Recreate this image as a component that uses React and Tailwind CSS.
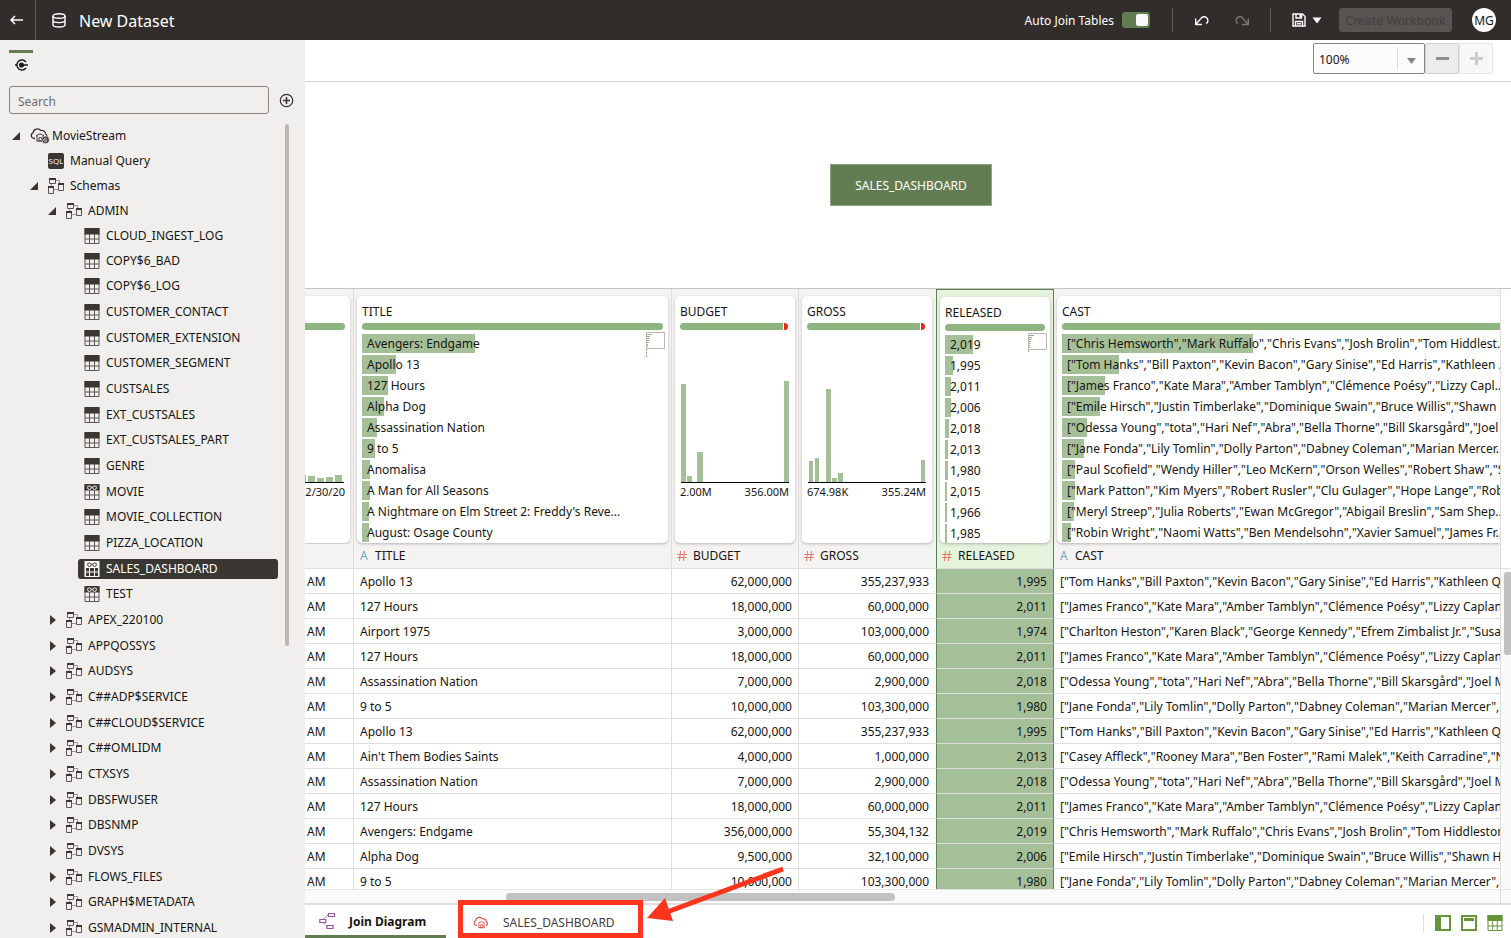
import React from "react";

const INK = "#3a3632";

const tables = [
  ["CLOUD_INGEST_LOG"], ["COPY$6_BAD"], ["COPY$6_LOG"], ["CUSTOMER_CONTACT"], ["CUSTOMER_EXTENSION"],
  ["CUSTOMER_SEGMENT"], ["CUSTSALES"], ["EXT_CUSTSALES"], ["EXT_CUSTSALES_PART"], ["GENRE"], ["MOVIE", true],
  ["MOVIE_COLLECTION"], ["PIZZA_LOCATION"], ["SALES_DASHBOARD", true], ["TEST", true],
];

const schemas = [
  "APEX_220100", "APPQOSSYS", "AUDSYS", "C##ADP$SERVICE", "C##CLOUD$SERVICE", "C##OMLIDM", "CTXSYS",
  "DBSFWUSER", "DBSNMP", "DVSYS", "FLOWS_FILES", "GRAPH$METADATA", "GSMADMIN_INTERNAL",
];

const casts = {
  apollo: '["Tom Hanks","Bill Paxton","Kevin Bacon","Gary Sinise","Ed Harris","Kathleen Quinlan"]',
  hours: '["James Franco","Kate Mara","Amber Tamblyn","Clémence Poésy","Lizzy Caplan"]',
  airport: '["Charlton Heston","Karen Black","George Kennedy","Efrem Zimbalist Jr.","Susan Clark"]',
  nation: '["Odessa Young","tota","Hari Nef","Abra","Bella Thorne","Bill Skarsgård","Joel McHale"]',
  nine: '["Jane Fonda","Lily Tomlin","Dolly Parton","Dabney Coleman","Marian Mercer","Sterling Hayden"]',
  saints: '["Casey Affleck","Rooney Mara","Ben Foster","Rami Malek","Keith Carradine","Nate Parker"]',
  avengers: '["Chris Hemsworth","Mark Ruffalo","Chris Evans","Josh Brolin","Tom Hiddleston"]',
  alpha: '["Emile Hirsch","Justin Timberlake","Dominique Swain","Bruce Willis","Shawn Hatosy"]',
};

const rows = [
  ["Apollo 13", "62,000,000", "355,237,933", "1,995", casts.apollo],
  ["127 Hours", "18,000,000", "60,000,000", "2,011", casts.hours],
  ["Airport 1975", "3,000,000", "103,000,000", "1,974", casts.airport],
  ["127 Hours", "18,000,000", "60,000,000", "2,011", casts.hours],
  ["Assassination Nation", "7,000,000", "2,900,000", "2,018", casts.nation],
  ["9 to 5", "10,000,000", "103,300,000", "1,980", casts.nine],
  ["Apollo 13", "62,000,000", "355,237,933", "1,995", casts.apollo],
  ["Ain't Them Bodies Saints", "4,000,000", "1,000,000", "2,013", casts.saints],
  ["Assassination Nation", "7,000,000", "2,900,000", "2,018", casts.nation],
  ["127 Hours", "18,000,000", "60,000,000", "2,011", casts.hours],
  ["Avengers: Endgame", "356,000,000", "55,304,132", "2,019", casts.avengers],
  ["Alpha Dog", "9,500,000", "32,100,000", "2,006", casts.alpha],
  ["9 to 5", "10,000,000", "103,300,000", "1,980", casts.nine],
];

const titleBars = [
  ["Avengers: Endgame", 113], ["Apollo 13", 34], ["127 Hours", 26], ["Alpha Dog", 22], ["Assassination Nation", 15],
  ["9 to 5", 13], ["Anomalisa", 8], ["A Man for All Seasons", 8],
  ["A Nightmare on Elm Street 2: Freddy's Reve...", 7], ["August: Osage County", 7],
];

const releasedBars = [
  ["2,019", 28], ["1,995", 8], ["2,011", 6], ["2,006", 6], ["2,018", 4],
  ["2,013", 3], ["1,980", 3], ["2,015", 2], ["1,966", 2], ["1,985", 2],
];

const castBars = [
  ['["Chris Hemsworth","Mark Ruffalo","Chris Evans","Josh Brolin","Tom Hiddlest...', 191],
  ['["Tom Hanks","Bill Paxton","Kevin Bacon","Gary Sinise","Ed Harris","Kathleen ...', 57],
  ['["James Franco","Kate Mara","Amber Tamblyn","Clémence Poésy","Lizzy Capl...', 43],
  ['["Emile Hirsch","Justin Timberlake","Dominique Swain","Bruce Willis","Shawn ...', 38],
  ['["Odessa Young","tota","Hari Nef","Abra","Bella Thorne","Bill Skarsgård","Joel ...', 25],
  ['["Jane Fonda","Lily Tomlin","Dolly Parton","Dabney Coleman","Marian Mercer...', 22],
  ['["Paul Scofield","Wendy Hiller","Leo McKern","Orson Welles","Robert Shaw","S...', 13],
  ['["Mark Patton","Kim Myers","Robert Rusler","Clu Gulager","Hope Lange","Rob...', 13],
  ['["Meryl Streep","Julia Roberts","Ewan McGregor","Abigail Breslin","Sam Shep...', 12],
  ['["Robin Wright","Naomi Watts","Ben Mendelsohn","Xavier Samuel","James Fr...', 9],
];

function SchemaIcon() {
  return (
    <svg className="size-4 shrink-0" viewBox="0 0 16 16" fill="none" stroke={INK}>
      <path d="M8 2.5h3.500V6M3.500 5.500V9M6 11.500h4" stroke="#99958f" />
      <path d="M1.500 1.500h6v4h-6zM.5 9.500h5v6h-5zM10.500 6.500h5v6h-5z" stroke="#5b5752" />
      <path d="M1 1h7M0 9h6M10 6h6" strokeWidth="2" />
    </svg>
  );
}

function TableIcon({ view, light }) {
  const c = light ? "#ffffff" : INK;
  const hole = light ? INK : "#f0efed";
  return (
    <svg className="size-4 shrink-0" viewBox="0 0 16 16" fill="none">
      {light ? (
        <g>
          <path d="M.5 0h15v16H.5z" fill="#ffffff" />
          <path d="M2 7h3v3.500H2zM6 7h4v3.500H6zM11 7h3v3.500h-3zM2 11.500h3V15H2zM6 11.500h4V15H6zM11 11.500h3V15h-3z" fill={INK} />
        </g>
      ) : (
        <g>
          <path d="M1 .5h14v15H1zM1 11h14M5.500 6v9.500M10.500 6v9.500" stroke="#5b5752" />
          <path d="M.5 0h15v6.500H.5z" fill={c} />
        </g>
      )}
      {view && (
        <g stroke={hole} strokeWidth="1">
          <circle cx="5.400" cy="3.700" r="1.800" />
          <circle cx="10.600" cy="3.700" r="1.800" />
          <path d="M7.200 3.400q.8-.6 1.600 0M3.400 2.400l-.7-.7M12.600 2.400l.7-.7" />
        </g>
      )}
    </svg>
  );
}

function Caret({ open }) {
  return (
    <svg className="size-[10px] shrink-0" viewBox="0 0 10 10" fill={INK}>
      {open ? <path d="M8 1v8H0z" /> : <path d="M2 0l6 5-6 5z" />}
    </svg>
  );
}

function CloudDb({ dark, className }) {
  const c = dark ? INK : "#d0453c";
  return (
    <svg className={className} viewBox="0 0 20 17" fill="none" stroke={c} strokeWidth="1.300">
      <path d="M5 11.500H4A3 3 0 0 1 3 5.800 4.500 4.500 0 0 1 11 3.600 3.600 3.600 0 0 1 15.600 7a2.400 2.400 0 0 1-.4 4.500" />
      <path d="M6 8.800l4-2 4 2M7 9v5M13 9v5M6.500 14h7" strokeWidth="1" />
      <path d="M9 10.500h2.500V14H9z" strokeWidth=".9" />
      {dark && (
        <g>
          <circle cx="15.500" cy="12.800" r="3.800" fill={INK} stroke="#f0efed" strokeWidth=".6" />
          <path d="M13.500 13h4M16.900 11.800a1.800 1.800 0 1 0 0 2.200" stroke="#f0efed" strokeWidth=".7" />
        </g>
      )}
    </svg>
  );
}

function TreeRow({ pad, first, children }) {
  return (
    <li className={`flex items-center whitespace-nowrap nth-[3n]:h-[25px] ${first ? "h-[25px]" : "h-[26px]"} ${pad}`}>
      {children}
    </li>
  );
}

function Sidebar() {
  return (
    <aside className="flex w-[305px] shrink-0 flex-col bg-[#f0efed]">
      <div className="px-[9px] pt-[10px]">
        <button aria-label="Connections" className="flex h-[26px] w-6 flex-col items-center border-t-3 border-[#627d52] pt-[5px]">
          <svg className="h-[14px] w-[15px]" viewBox="0 0 15 14" fill="none" stroke="#1d1b19" strokeWidth="1.500">
            <path d="M12 4.200A5 5 0 1 0 12 9.800M1 7h2M8 7h6" />
            <circle cx="7.500" cy="7" r="1.800" fill="#1d1b19" />
          </svg>
        </button>
      </div>
      <div className="flex items-center gap-[10px] px-[9px] pt-[10px]">
        <input
          type="text"
          aria-label="Search"
          placeholder="Search"
          className="h-7 w-[260px] rounded-[3px] border border-[#8b8580] bg-transparent px-2 pt-0.5 text-[12px] placeholder:text-[#6f6a66] outline-none"
        />
        <button aria-label="Add">
          <svg className="size-[15px]" viewBox="0 0 15 15" fill="none" stroke="#33302d" strokeWidth="1.200">
            <circle cx="7.500" cy="7.500" r="6.200" />
            <path d="M7.500 4v7M4 7.500h7" strokeWidth="1.500" />
          </svg>
        </button>
      </div>
      <div className="flex min-h-0 flex-1 gap-[7px] overflow-hidden pt-[9px]">
        <ul className="w-[278px] text-[12px] text-[#161513]">
          <TreeRow first pad="pl-3">
            <Caret open />
            <CloudDb dark className="ml-2 mr-[2px] h-[17px] w-5" />
            MovieStream
          </TreeRow>
          <TreeRow first pad="pl-12">
            <span className="mr-1.5 flex size-4 items-center justify-center overflow-hidden rounded-[2px] bg-[#3a3632] font-['Open_Sans'] text-[8px] text-white">SQL</span>
            Manual Query
          </TreeRow>
          <TreeRow first pad="pl-[30px] gap-2">
            <Caret open />
            <SchemaIcon />
            <span className="-ml-0.5">Schemas</span>
          </TreeRow>
          <TreeRow first pad="pl-12 gap-2">
            <Caret open />
            <SchemaIcon />
            <span className="-ml-0.5">ADMIN</span>
          </TreeRow>
          {tables.map(([name, view], i) => {
            const on = name === "SALES_DASHBOARD";
            return (
              <TreeRow key={name} first={i < 2} pad="pl-[78px]">
                <div className={`flex h-5 flex-1 items-center gap-1.5 rounded-[3px] px-1.5 ${on ? "bg-[#3a3632] text-white" : ""}`}>
                  <TableIcon view={view} light={on} />
                  {name}
                </div>
              </TreeRow>
            );
          })}
          {schemas.map((name) => (
            <TreeRow key={name} pad="pl-12 gap-2">
              <Caret />
              <SchemaIcon />
              <span className="-ml-0.5">{name}</span>
            </TreeRow>
          ))}
        </ul>
        <div className="mt-px h-[522px] w-1 rounded-full bg-[#bcb6b1]" />
      </div>
    </aside>
  );
}

function Header() {
  return (
    <header className="flex h-10 shrink-0 items-center bg-[#312d2a] pr-[15px] text-white">
      <button aria-label="Back" className="flex h-10 w-9 items-center justify-center border-r border-[#5c5855] pr-0.5">
        <svg className="h-[10px] w-[13px]" viewBox="0 0 13 10" fill="none" stroke="#fff" strokeWidth="1.500">
          <path d="M13 5H1M5 1L1 5l4 4" />
        </svg>
      </button>
      <svg className="ml-4 h-[15px] w-[14px]" viewBox="0 0 14 15" fill="none" stroke="#fff" strokeWidth="1.400">
        <ellipse cx="7" cy="3" rx="6" ry="2.200" />
        <path d="M1 3v8.800C1 13 3.700 14 7 14s6-1 6-2.200V3M1 7.500C1 8.700 3.700 9.600 7 9.600s6-.9 6-2.100" />
      </svg>
      <h1 className="ml-[13px] flex-1 pt-0.5 text-[16px]">New Dataset</h1>
      <label className="flex items-center gap-2">
        <span className="pt-0.5 text-[12px]">Auto Join Tables</span>
        <input
          type="checkbox"
          defaultChecked
          className="relative h-4 w-7 appearance-none rounded-[3px] bg-[#627d52] after:absolute after:right-0.5 after:top-0.5 after:size-3 after:rounded-[2px] after:bg-[#fbf9f8] after:content-['']"
        />
      </label>
      <div className="ml-[22px] h-6 w-px bg-[#5c5855]" />
      <button aria-label="Undo" className="ml-[21px]">
        <svg className="h-[11px] w-[15px]" viewBox="0 0 15 11" fill="none" stroke="#fff" strokeWidth="1.400">
          <path d="M1.700 3.500v6H8M1.900 9.300L6.800 3.600A3.800 3.800 0 1 1 12.300 8.600" />
        </svg>
      </button>
      <button aria-label="Redo" className="ml-[26px]" disabled>
        <svg className="h-[11px] w-[15px]" viewBox="0 0 15 11" fill="none" stroke="#7b7774" strokeWidth="1.400">
          <path d="M13.300 3.500v6H7M13.100 9.300L8.200 3.600A3.800 3.800 0 1 0 2.700 8.600" />
        </svg>
      </button>
      <div className="ml-5 h-6 w-px bg-[#5c5855]" />
      <button aria-label="Save" className="ml-[21px] flex items-center gap-[6px]">
        <svg className="size-[14px]" viewBox="0 0 14 14" fill="none" stroke="#fff" strokeWidth="1.400">
          <path d="M1 1h9.500L13 3.500V13H1zM4 1v4h5.500V1M3.500 13V8.500h7V13M5 10.800h4" />
          <path d="M7.500 1.500h1.500v2.500H7.500z" fill="#fff" stroke="none" />
        </svg>
        <svg className="h-[7px] w-[10px]" viewBox="0 0 10 7" fill="#fff">
          <path d="M.5.500h9L5 6.500z" />
        </svg>
      </button>
      <button disabled className="ml-[17px] h-6 w-[113px] rounded-[3px] bg-[#575451] pt-0.5 text-[12px] font-medium text-[#45423f]">
        Create Workbook
      </button>
      <button className="ml-5 flex size-6 items-center justify-center rounded-full bg-white pt-0.5 text-[12px] text-[#161513]">MG</button>
    </header>
  );
}

function QualityBar({ missing }) {
  return (
    <div className={`flex h-[7px] gap-px ${missing ? "mr-px" : ""}`}>
      <div className={`flex-1 bg-[#8db580] ${missing ? "rounded-l-full" : "rounded-full"}`} />
      {missing && <div className="w-1 rounded-r-full bg-[#e5281e]" />}
    </div>
  );
}

function Card({ title, missing, bleed, className = "", mini, children }) {
  return (
    <div className={`relative overflow-hidden bg-white shadow-[0_1px_3px_rgba(0,0,0,0.25)] ${className}`}>
      <div className="mb-[3px] mt-[7px] h-[17px] px-[5px] text-[12px] leading-[17px]">{title}</div>
      <div className={missing ? "pl-[5px] pr-1.5" : bleed ? "pl-[5px]" : "px-[5px]"}>
        {bleed ? <div className="h-[7px] rounded-l-full bg-[#8db580]" /> : <QualityBar missing={missing} />}
        {children}
      </div>
      {mini && (
        <svg className="absolute right-[3px] top-9 h-[26px] w-[19px]" viewBox="0 0 19 26" fill="none">
          <path d="M.5.500h18v16H.5z" stroke="#bcb6b1" />
          <path d="M1 2.500h5M1 4.500h3M1 6.500h2.500M1 8.500h2M1 10.500h1.500M1 12.500h1M1 14.500h1" stroke="#8db580" />
          <path d={mini === "long" ? "M.5 17v8" : "M.5 17v2"} stroke="#8db580" strokeDasharray="2 1" />
        </svg>
      )}
    </div>
  );
}

function BarList({ items }) {
  return (
    <ul className="mt-1 flex flex-col gap-0.5">
      {items.map(([text, w]) => (
        <li key={text} className="relative h-[19px] whitespace-nowrap pl-[5px] text-[12px] leading-[20px]">
          <div className="absolute inset-y-0 left-0 bg-[#a5c098]" style={{ width: w }} />
          <span className="relative">{text}</span>
        </li>
      ))}
    </ul>
  );
}

function Histogram({ width, bars, from, to }) {
  return (
    <div className="pl-px pt-1">
      <svg className="h-[150px] w-full" viewBox={`0 0 ${width} 150`} preserveAspectRatio="none">
        {bars.map(([x, w, h]) => (
          <rect key={x} x={x} y={148 - h} width={w} height={h} fill="#a5c098" />
        ))}
        <path d={`M0 148.500H${width}`} stroke="#000" />
      </svg>
      <div className="-ml-px flex justify-between text-[11px] leading-[16px]">
        <span>{from}</span>
        <span>{to}</span>
      </div>
    </div>
  );
}

const headCell = "border-r border-[#dfdedc] bg-[#f4f3f2] text-left font-normal";
const tileCell = headCell + " px-[3px] pt-[7px] pb-px align-top";
const nameCell = headCell + " h-[25px] border-b p-0 align-middle";
const cell = "h-[25px] overflow-hidden whitespace-nowrap border-b border-r border-[#dfdedc] px-1.5 pb-0 pt-0.5";

function ColumnName({ type, children }) {
  return (
    <div className="flex items-center pl-1.5">
      {type === "A" ? (
        <span className="w-[15px] text-[12px] text-[#6fa9bd]">A</span>
      ) : (
        <svg className="-ml-px mr-1.5 size-[10px]" viewBox="0 0 10 10" fill="none" stroke="#dd7a68">
          <path d="M3.500 0L2.500 10M7.500 0l-1 10M.3 3.500h9.500M0 6.500h9.500" />
        </svg>
      )}
      {children}
    </div>
  );
}

function DataGrid() {
  return (
    <div className="flex min-h-0 flex-1">
      <div className="min-w-0 flex-1 overflow-hidden">
        <table className="w-full table-fixed border-separate border-spacing-0 text-[12px] text-[#161513]">
          <colgroup>
            <col className="w-[49px]" />
            <col className="w-[318px]" />
            <col className="w-[127px]" />
            <col className="w-[137px]" />
            <col className="w-[118px]" />
            <col />
          </colgroup>
          <thead>
            <tr>
              <th className={headCell + " pb-px pl-0 pr-[3px] pt-[7px] align-top"}>
                <div className="h-[247px] overflow-hidden rounded-r-[5px] bg-white pr-[5px] pt-[27px] shadow-[0_1px_3px_rgba(0,0,0,0.25)]">
                  <div className="h-[7px] rounded-r-full bg-[#8db580]" />
                  <svg className="mt-1 h-[150px] w-10" viewBox="0 0 40 150">
                    <path d="M0 141h1v7H0zM3 142h7v6H3zM12 144h7v4h-7zM21 143h7v5h-7zM30 141h7v7h-7z" fill="#a5c098" />
                    <path d="M0 148.500h39" stroke="#000" />
                  </svg>
                  <div className="flex justify-end overflow-hidden text-[11px] leading-[16px]">
                    <span>12/30/20</span>
                  </div>
                </div>
              </th>
              <th className={tileCell}>
                <Card title="TITLE" mini="long" className="h-[247px] rounded-[5px]">
                  <BarList items={titleBars} />
                </Card>
              </th>
              <th className={tileCell}>
                <Card title="BUDGET" missing className="h-[247px] rounded-[5px]">
                  <Histogram width={108} bars={[[0, 5, 98], [6, 5, 6], [16, 6, 30], [103, 5, 101]]} from="2.00M" to="356.00M" />
                </Card>
              </th>
              <th className={tileCell + " border-r-transparent"}>
                <Card title="GROSS" missing className="h-[247px] rounded-[5px]">
                  <Histogram
                    width={118}
                    bars={[[1, 4, 21], [7, 4, 24], [18, 5, 93], [24, 5, 4], [30, 5, 9], [113, 4, 22]]}
                    from="674.98K"
                    to="355.24M"
                  />
                </Card>
              </th>
              <th className="border-x border-t border-[#5b7f55] bg-[#e5f3dc] px-[3px] pb-px pt-[7px] text-left align-top font-normal">
                <Card title="RELEASED" mini="short" className="h-[246px] rounded-[5px]">
                  <BarList items={releasedBars} />
                </Card>
              </th>
              <th className="bg-[#f4f3f2] pb-px pl-[3px] pr-0 pt-[7px] text-left align-top font-normal">
                <Card title="CAST" bleed className="h-[247px] rounded-l-[5px]">
                  <BarList items={castBars} />
                </Card>
              </th>
            </tr>
            <tr>
              <th className={nameCell} />
              <th className={nameCell}><ColumnName type="A">TITLE</ColumnName></th>
              <th className={nameCell}><ColumnName>BUDGET</ColumnName></th>
              <th className={nameCell + " border-r-transparent"}><ColumnName>GROSS</ColumnName></th>
              <th className="border-x border-b border-x-[#5b7f55] border-b-[#dfdedc] bg-[#e5f3dc] p-0 text-left font-normal">
                <ColumnName>RELEASED</ColumnName>
              </th>
              <th className={nameCell + " border-r-0"}><ColumnName type="A">CAST</ColumnName></th>
            </tr>
          </thead>
          <tbody>
            {rows.map(([title, budget, gross, released, cast], i) => (
              <tr key={i}>
                <td className="h-[25px] border-b border-r border-[#dfdedc] pb-0 pl-0.5 pt-0.5">AM</td>
                <td className={cell}>{title}</td>
                <td className={cell + " text-right"}>{budget}</td>
                <td className={cell + " border-r-transparent text-right"}>{gross}</td>
                <td className="h-[25px] border-x border-b border-x-[#5b7f55] border-b-[#dfdedc] bg-[#a5c098] px-1.5 pb-0 pt-0.5 text-right">{released}</td>
                <td className={cell + " border-r-0 pr-0"}>{cast}</td>
              </tr>
            ))}
          </tbody>
        </table>
      </div>
      <div className="flex w-[11px] shrink-0 flex-col border-l border-[#dfdedc]">
        <div className="h-[280px] border-b border-[#dfdedc]" />
        <div className="flex flex-1 justify-end bg-[#fafafa] pt-[3px]">
          <div className="h-[83px] w-[7px] rounded-l-[3px] bg-[#c1c1c1]" />
        </div>
      </div>
    </div>
  );
}

function Footer() {
  return (
    <footer className="flex h-[35px] shrink-0 items-stretch border-t-2 border-[#dfdedc] text-[12px]">
      <button className="flex w-[141px] items-center border-b-3 border-[#627d52] pl-[14px] pt-1 font-bold text-[#161513]">
        <svg className="mb-1 mr-[13px] h-[17px] w-[17px]" viewBox="0 0 17 17" fill="none" stroke="#9a4f9f">
          <path d="M9.500 1.500h6v3h-6zM.8 7.500h6v3h-6zM8 13.500h6v3H8z" strokeWidth="1.200" />
          <path d="M9 3.200L4.500 7M4.500 10.800L7.800 14.500" strokeDasharray="1.500 .8" />
        </svg>
        Join Diagram
      </button>
      <div className="relative ml-3">
        <button className="flex h-[33px] w-[185px] items-center pl-[15px] pt-0.5 text-[#45413d]">
          <CloudDb className="mr-[13px] h-[16px] w-[17px]" />
          SALES_DASHBOARD
        </button>
        <div className="pointer-events-none absolute inset-x-0 -top-[5px] bottom-0 border-5 border-[#fc351c]" />
        <svg className="pointer-events-none absolute -top-[40px] left-[187px] h-[60px] w-[140px]" viewBox="0 0 140 60">
          <path d="M138 4L22 47" stroke="#fc351c" strokeWidth="5" />
          <path d="M2 53L20 33L28 56z" fill="#fc351c" />
        </svg>
      </div>
      <div className="ml-auto flex items-center gap-[10px] pr-2 pt-[3px]">
        <div className="mr-px h-[18px] w-px bg-[#dfdedc]" />
        <button aria-label="Side panel layout">
          <svg className="size-4" viewBox="0 0 16 16" fill="none">
            <path d="M1 1h14v14H1z" stroke="#669438" strokeWidth="2" />
            <path d="M0 0h6v16H0z" fill="#669438" />
          </svg>
        </button>
        <button aria-label="Top panel layout">
          <svg className="size-4" viewBox="0 0 16 16" fill="none" stroke="#669438">
            <path d="M1 1h14v14H1z" strokeWidth="2" />
            <path d="M3 4.500h10" strokeWidth="3" />
          </svg>
        </button>
        <button aria-label="Table layout">
          <svg className="size-4" viewBox="0 0 16 16" fill="none" stroke="#669438">
            <path d="M1 .5h14v15H1zM1 11h14M5.700 6v9.500M10.300 6v9.500" />
            <path d="M.5 0h15v6H.5z" fill="#669438" stroke="none" />
          </svg>
        </button>
      </div>
    </footer>
  );
}

export default function App() {
  return (
    <div className="flex h-screen flex-col overflow-hidden bg-white font-['Noto_Sans',sans-serif]">
      <Header />
      <div className="flex min-h-0 flex-1">
        <Sidebar />
        <main className="flex min-w-0 flex-1 flex-col">
          <div className="flex h-[42px] shrink-0 items-start justify-end border-b border-[#d2d0ce] pr-[18px] pt-[3px]">
            <div className="relative">
              <select
                aria-label="Zoom"
                className="h-[31px] w-28 appearance-none rounded-[2px] border border-[#8b8580] bg-[#fcfcfc] pl-[5px] pt-0.5 text-[12px] text-[#161513] outline-none"
              >
                <option>100%</option>
              </select>
              <div className="pointer-events-none absolute inset-y-1 right-px flex w-[27px] items-center justify-center border-l border-[#dfdedc] pt-1">
                <svg className="h-[6px] w-[9px]" viewBox="0 0 9 6" fill="#8b8580"><path d="M0 0h9L4.500 6z" /></svg>
              </div>
            </div>
            <button aria-label="Zoom out" className="flex h-[31px] w-[34px] items-center justify-center rounded-[2px] border border-[#cfcfcf] bg-[#ececec]">
              <svg className="size-[13px]" viewBox="0 0 13 13"><path d="M0 5h13v3H0z" fill="#8b8f90" /></svg>
            </button>
            <button aria-label="Zoom in" disabled className="flex h-[31px] w-[34px] items-center justify-center rounded-[2px] border border-[#e4e4e4] bg-[#f7f7f7]">
              <svg className="size-[13px]" viewBox="0 0 13 13"><path d="M0 5h5V0h3v5h5v3H8v5H5V8H0z" fill="#c9cbcc" /></svg>
            </button>
          </div>
          <div className="flex h-[207px] shrink-0 items-center justify-center border-b border-[#c6c4c2] pl-1.5">
            <button className="h-[42px] w-[162px] border border-[#8fa583] bg-[#627d52] pt-0.5 text-[12px] text-white">SALES_DASHBOARD</button>
          </div>
          <DataGrid />
          <div className="flex h-[14px] shrink-0 border-t border-[#e6e5e4] bg-[#fafafa]">
            <div className="flex-1 pl-[201px] pt-[3px]">
              <div className="h-2 w-[389px] rounded-full bg-[#c1c1c1]" />
            </div>
            <div className="w-[11px] border-l border-[#dfdedc]" />
          </div>
          <Footer />
        </main>
      </div>
    </div>
  );
}
